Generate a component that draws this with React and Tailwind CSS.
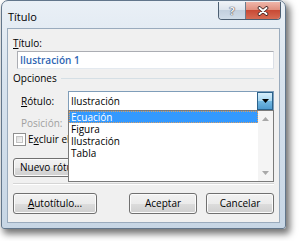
import React from 'react';

function Btn({ children, className = '' }) {
  return (
    <div
      className={`flex items-center justify-center rounded-[3px] border border-[#707070] bg-[linear-gradient(#f2f2f2_0%,#ebebeb_50%,#dddddd_50%,#cfcfcf_100%)] shadow-[inset_0_0_0_1px_#fbfbfb] ${className}`}
    >
      {children}
    </div>
  );
}

function Tri({ dir = 'down', color = '#000' }) {
  return (
    <svg width="7" height="4" viewBox="0 0 7 4">
      {dir === 'down' ? <path d="M0 0H7L3.5 4Z" fill={color} /> : <path d="M0 4H7L3.5 0Z" fill={color} />}
    </svg>
  );
}

export default function App() {
  return (
    <div className="w-[300px] h-[241px] bg-white overflow-hidden font-['Open_Sans',sans-serif] text-[10px] text-black">
      {/* window frame */}
      <div className="ml-[1px] w-[285px] h-[229px] rounded-t-[7px] rounded-b-[3px] border border-[#62768b] bg-[linear-gradient(180deg,#eaf0f6_0%,#d8e3ee_35%,#c7d6e5_100%)] shadow-[3px_4px_7px_1px_rgba(0,0,0,0.55)] flex flex-col px-[5px] pb-[5px]">
        {/* title bar */}
        <div className="h-[27px] flex items-start justify-between">
          <div className="pl-[1px] pt-[9px] text-[11px] leading-[14px]">Título</div>
          <div className="mt-[1px] -mr-[1px] flex h-[18px] rounded-b-[4px] border border-t-0 border-[#4d5f72] overflow-hidden">
            <div className="w-[27px] flex items-center justify-center border-r border-[#6a7b8c] bg-[linear-gradient(#eef2f6_0%,#dbe3ec_50%,#c3d0de_50%,#d0dce8_100%)]">
              <span className="text-[11px] font-bold leading-none text-[#f4f4f4] [text-shadow:0_0_1px_#334,0_0_1px_#334]">?</span>
            </div>
            <div className="w-[34px] flex items-center justify-center bg-[linear-gradient(#efb5a9_0%,#df8d7c_50%,#c84a35_50%,#d66c54_100%)]">
              <svg width="12" height="10" viewBox="0 0 12 10">
                <path d="M2.5 2L9.5 8M9.5 2L2.5 8" stroke="#3a2020" strokeWidth="3.6" strokeLinecap="round" />
                <path d="M2.5 2L9.5 8M9.5 2L2.5 8" stroke="#fff" strokeWidth="2" strokeLinecap="round" />
              </svg>
            </div>
          </div>
        </div>

        {/* client area */}
        <div className="h-[195px] border border-[#9aabbd] bg-[#f0f0f0] flex flex-col px-[5px]">
          <div className="mt-[7px] leading-[14px]">
            <span className="underline">T</span>ítulo:
          </div>
          <div className="ml-[4px] mt-[1px] h-[18px] border border-[#abadb3] border-b-[#e3e9ef] border-r-[#dbdfe6] bg-white flex items-center pl-[2px] font-semibold text-[#2f66b3] leading-[16px]">
            Ilustración 1
          </div>

          <div className="mt-[2px] h-[14px] flex items-center gap-[4px]">
            <span className="leading-[14px]">Opciones</span>
            <div className="flex-1 h-px bg-[#d5dfe5]" />
          </div>

          <div className="mt-[6px] h-[20px] flex items-center">
            <div className="w-[55px] pl-[8px] leading-[14px]">
              <span className="underline">R</span>ótulo:
            </div>
            <div className="relative w-[206px] h-[20px] border border-[#7f9db9] bg-white flex items-center">
              <span className="pl-[2px] flex-1 leading-[14px]">Ilustración</span>
              <div className="w-[16px] h-[18px] border border-[#2c628b] bg-[linear-gradient(#d6eefb_0%,#a9d8f2_50%,#74b9e2_50%,#4f9bd0_100%)] flex items-center justify-center">
                <Tri />
              </div>

              {/* open list */}
              <div className="absolute left-[-1px] top-[18px] w-[206px] h-[72px] border border-[#7a7a7a] bg-white flex z-10">
                <div className="flex-1 flex flex-col">
                  <div className="h-[12px] leading-[10px] pl-[1px] bg-[#3399ff] text-white border border-dotted border-[#d9a066]">Ecuación</div>
                  <div className="h-[12px] leading-[12px] pl-[2px]">Figura</div>
                  <div className="h-[12px] leading-[12px] pl-[2px]">Ilustración</div>
                  <div className="h-[12px] leading-[12px] pl-[2px]">Tabla</div>
                </div>
                <div className="w-[15px] bg-[#f4f4f4] flex flex-col items-center justify-between pt-[6px] pb-[6px]">
                  <Tri dir="up" color="#a8a8a8" />
                  <Tri dir="down" color="#a8a8a8" />
                </div>
              </div>
            </div>
          </div>

          <div className="mt-[5px] pl-[8px] leading-[14px]">
            <span className="text-[#a0a0a0]">Posición:</span>
          </div>

          {/* row partly covered by the open list */}
          <div className="mt-[3px] h-[13px] flex items-center gap-[2px]">
            <div className="shrink-0 w-[13px] h-[13px] border border-[#8f8f8f] bg-white p-[2px]">
              <div className="w-full h-full border border-[#c4c4c4] bg-[linear-gradient(135deg,#dcdcdc,#f8f8f8)]" />
            </div>
            <span className="leading-[13px] whitespace-nowrap">
              E<span className="underline">x</span>cluir el
            </span>
          </div>

          <div className="mt-[12px] w-[55px] overflow-hidden">
            <Btn className="w-[88px] h-[19px] justify-start pl-[6px] whitespace-nowrap">Nuevo rótulo...</Btn>
          </div>

          <div className="mt-[6px] h-[2px] border-t border-[#d5d5d5] border-b border-b-white" />

          <div className="mt-[8px] flex">
            <Btn className="w-[84px] h-[21px]">
              <span className="underline">A</span>utotítulo...
            </Btn>
            <Btn className="ml-auto w-[68px] h-[21px]">Aceptar</Btn>
            <Btn className="ml-[9px] w-[68px] h-[21px]">Cancelar</Btn>
          </div>
        </div>
      </div>
    </div>
  );
}
